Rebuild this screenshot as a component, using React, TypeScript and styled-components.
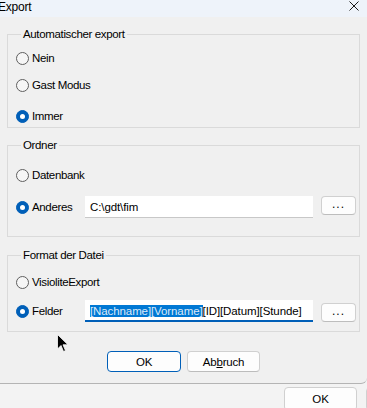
import React from "react";
import styled, { createGlobalStyle } from "styled-components";

const GlobalStyle = createGlobalStyle`
  html, body {
    margin: 0;
    padding: 0;
    background: #f3f3f3;
  }
  body {
    font-family: "Liberation Sans", Arial, sans-serif;
    font-size: 11px;
    letter-spacing: -0.35px;
    color: #000;
  }
  * {
    box-sizing: border-box;
  }
`;

const Screen = styled.div`
  position: relative;
  width: 367px;
  height: 408px;
  overflow: hidden;
  background: #f3f3f3;
`;

const Dialog = styled.div`
  width: 367px;
  background: #f0f0f0;
  border-bottom: 1px solid #b4b4b4;
  border-bottom-right-radius: 6px;
`;

const TitleBar = styled.div`
  height: 17px;
  background: #eef3fa;
  display: flex;
  align-items: center;
  justify-content: space-between;
  padding-right: 8px;
`;

const Title = styled.span`
  font-size: 12px;
  letter-spacing: -0.2px;
  margin-left: -2px;
  margin-top: -3px;
`;

const Body = styled.div`
  padding: 10px 7px 11px 7px;
  display: flex;
  flex-direction: column;
`;

const Group = styled.fieldset<{ $top: number; $pt: number; $pb: number; $gap: number }>`
  margin: ${(p) => p.$top}px 0 0 0;
  padding: ${(p) => p.$pt}px 3px ${(p) => p.$pb}px 8px;
  border: 1px solid #dadada;
  display: flex;
  flex-direction: column;
  gap: ${(p) => p.$gap}px;
  min-width: 0;
`;

const Legend = styled.legend`
  margin-left: 5px;
  padding: 0 2px;
  line-height: 14px;
  font-size: 11.5px;
`;

const Row = styled.div<{ $h?: number }>`
  height: ${(p) => p.$h ?? 20}px;
  display: flex;
  align-items: center;
`;

const RadioLabel = styled.label<{ $w?: number }>`
  display: flex;
  align-items: center;
  gap: 3px;
  width: ${(p) => (p.$w ? `${p.$w}px` : "auto")};
  flex-shrink: 0;
  font-size: 11.5px;
`;

const RadioCircle = styled.span<{ $checked?: boolean }>`
  width: 13px;
  height: 13px;
  border-radius: 50%;
  flex-shrink: 0;
  background: ${(p) => (p.$checked ? "#005fb8" : "#f6f6f6")};
  border: 1px solid ${(p) => (p.$checked ? "#005fb8" : "#5f5f5f")};
  display: flex;
  align-items: center;
  justify-content: center;
  &::after {
    content: "";
    display: ${(p) => (p.$checked ? "block" : "none")};
    width: 5px;
    height: 5px;
    border-radius: 50%;
    background: #fff;
  }
`;

const TextBox = styled.div<{ $focused?: boolean }>`
  width: 228px;
  height: 22px;
  background: #fff;
  border-bottom: ${(p) => (p.$focused ? "2px solid #005fb8" : "1px solid #c8c8c8")};
  display: flex;
  align-items: center;
  padding: ${(p) => (p.$focused ? "2px" : "0")} 5px 0 5px;
  font-size: 11.5px;
  letter-spacing: -0.1px;
  white-space: nowrap;
  overflow: hidden;
`;

const Selected = styled.span`
  background: #0078d4;
  color: #dbe9f8;
`;

const BrowseButton = styled.button<{ $shift: number }>`
  margin-left: 8px;
  margin-top: ${(p) => p.$shift}px;
  width: 35px;
  height: 19px;
  background: #fdfdfd;
  border: 1px solid #d0d0d0;
  border-bottom-color: #bdbdbd;
  border-radius: 4px;
  font-family: inherit;
  font-size: 12px;
  padding: 0 0 4px 0;
  letter-spacing: 1px;
  color: #000;
`;

const Actions = styled.div`
  margin-top: 19px;
  display: flex;
  justify-content: center;
  gap: 6px;
`;

const PushButton = styled.button<{ $primary?: boolean }>`
  width: ${(p) => (p.$primary ? 74 : 73)}px;
  height: 21px;
  background: #fdfdfd;
  border: 1px solid ${(p) => (p.$primary ? "#005fb8" : "#d0d0d0")};
  border-bottom-color: ${(p) => (p.$primary ? "#005fb8" : "#bcbcbc")};
  border-radius: 4px;
  font-family: inherit;
  font-size: 11.5px;
  letter-spacing: -0.2px;
  color: #000;
  padding: 0;
`;

const BackBar = styled.div`
  display: flex;
  gap: 9px;
  padding: 3px 0 0 284px;
  width: 460px;
`;

const BackButton = styled.button`
  width: 73px;
  height: 24px;
  flex-shrink: 0;
  background: #fdfdfd;
  border: 1px solid #d0d0d0;
  border-radius: 4px;
  font-family: inherit;
  font-size: 11.5px;
  color: #000;
  padding: 0;
`;

const Cursor = styled.svg`
  position: absolute;
  left: 57px;
  top: 334px;
`;

const CloseIcon = () => (
  <svg width="10" height="10" viewBox="0 0 10 10" style={{ marginTop: -6 }}>
    <path d="M0.5 0.5 L9.5 9.5 M9.5 0.5 L0.5 9.5" stroke="#1a1a1a" strokeWidth="1" />
  </svg>
);

const Radio = ({ label, checked, width }: { label: string; checked?: boolean; width?: number }) => (
  <RadioLabel $w={width}>
    <RadioCircle $checked={checked} />
    {label}
  </RadioLabel>
);

export default function App() {
  return (
    <Screen>
      <GlobalStyle />
      <Dialog>
        <TitleBar>
          <Title>Export</Title>
          <CloseIcon />
        </TitleBar>
        <Body>
          <Group $top={0} $pt={7} $pb={1} $gap={7}>
            <Legend>Automatischer export</Legend>
            <Row>
              <Radio label="Nein" />
            </Row>
            <Row style={{ marginBottom: 4 }}>
              <Radio label="Gast Modus" />
            </Row>
            <Row>
              <Radio label="Immer" checked />
            </Row>
          </Group>

          <Group $top={10} $pt={13} $pb={18} $gap={11}>
            <Legend>Ordner</Legend>
            <Row>
              <Radio label="Datenbank" />
            </Row>
            <Row $h={22}>
              <Radio label="Anderes" checked width={69} />
              <TextBox>C:\gdt\fim</TextBox>
              <BrowseButton $shift={-3}>...</BrowseButton>
            </Row>
          </Group>

          <Group $top={11} $pt={10} $pb={9} $gap={8}>
            <Legend>Format der Datei</Legend>
            <Row>
              <Radio label="VisioliteExport" />
            </Row>
            <Row $h={22}>
              <Radio label="Felder" checked width={69} />
              <TextBox $focused>
                <Selected>[Nachname][Vorname]</Selected>[ID][Datum][Stunde]
              </TextBox>
              <BrowseButton $shift={3}>...</BrowseButton>
            </Row>
          </Group>

          <Actions>
            <PushButton $primary>OK</PushButton>
            <PushButton>
              Ab<u>b</u>ruch
            </PushButton>
          </Actions>
        </Body>
      </Dialog>
      <BackBar>
        <BackButton>OK</BackButton>
        <BackButton />
      </BackBar>
      <Cursor width="12" height="19" viewBox="0 0 12 19">
        <path d="M0.5 0.5 L0.5 15 L4 11.5 L6.5 17.5 L8.5 16.6 L6 10.8 L11 10.8 Z" fill="#000" stroke="#fff" strokeWidth="0.8" />
      </Cursor>
    </Screen>
  );
}
